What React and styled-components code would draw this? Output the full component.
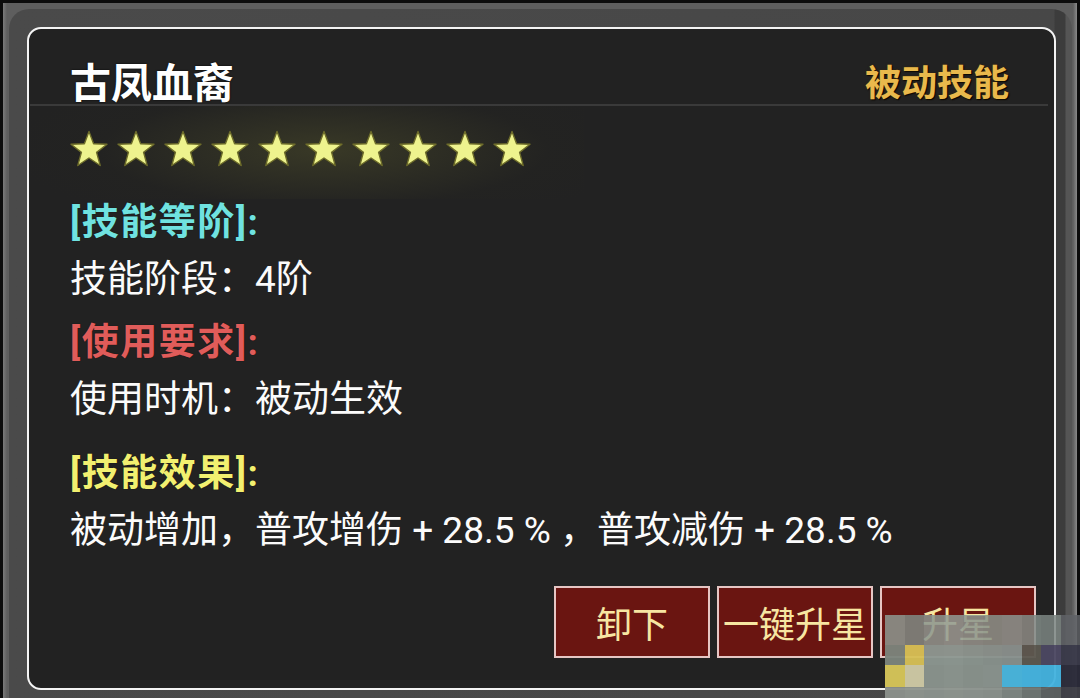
import React from "react";
import styled, { createGlobalStyle } from "styled-components";

const GlobalStyle = createGlobalStyle`
  html, body {
    margin: 0;
    padding: 0;
    background: #0c0c0c;
    overflow: hidden;
  }
  body {
    font-family: Roboto, "Noto Sans CJK SC", "Noto Sans", sans-serif;
  }
`;

const Page = styled.div`
  position: relative;
  width: 1080px;
  height: 698px;
  box-sizing: border-box;
  padding: 3px 3px 0 3px;
  overflow: hidden;
`;

const Frame = styled.div`
  height: 100%;
  box-sizing: border-box;
  padding: 6px 5px 0 6px;
  background: linear-gradient(90deg, #7a7a7a 0, #5e5e5e 4px, #5e5e5e calc(100% - 4px), #8a8a8a 100%);
`;

const Bezel = styled.div`
  height: 100%;
  box-sizing: border-box;
  padding: 18px 16px 0 18px;
  background: linear-gradient(90deg, #4a4a4a 0, #474747 calc(100% - 18px), #3c3c3c calc(100% - 17px), #3c3c3c calc(100% - 7px), #555 calc(100% - 6px));
  border-radius: 20px 20px 0 0;
`;

const Panel = styled.div`
  height: 663px;
  box-sizing: border-box;
  border: 2px solid #f4f4f4;
  border-radius: 14px;
  background: #222222;
  display: flex;
  flex-direction: column;
  overflow: hidden;
`;

const Header = styled.div`
  height: 77px;
  box-sizing: border-box;
  margin: 0 6px 0 1px;
  padding: 35px 39px 0 40px;
  border-bottom: 2px solid #3a3a3a;
  display: flex;
  justify-content: space-between;
  align-items: flex-start;
`;

const Title = styled.h1`
  margin: 0;
  font-size: 41px;
  line-height: 40px;
  font-weight: 700;
  color: #ffffff;
  text-shadow: 0 0 2px #000;
`;

const Kind = styled.span`
  font-size: 36px;
  line-height: 40px;
  font-weight: 700;
  color: #e9b94c;
  text-shadow: 0 0 2px #3a2500, 1px 1px 1px #000;
`;

const StarRow = styled.div`
  display: flex;
  gap: 7px;
  padding: 23px 0 30px 40px;
  margin-right: 470px;
  background: radial-gradient(ellipse 320px 80px at 295px 44px, rgba(88, 88, 44, 0.42), rgba(40, 40, 30, 0.15) 70%, rgba(34, 34, 34, 0) 100%);
`;

const Star = () => (
  <svg width="40" height="40" viewBox="0 0 40 40">
    <polygon
      points="20,2.5 24.6,14.8 38,15.2 27.6,23.4 31.2,36.5 20,29 8.8,36.5 12.4,23.4 2,15.2 15.4,14.8"
      fill="#eef38e"
      stroke="#6d6c2a"
      strokeWidth="1.4"
      strokeLinejoin="round"
    />
  </svg>
);

const Body = styled.div`
  padding: 0 18px 0 41px;
  display: flex;
  flex-direction: column;
  flex: 1;
`;

const Section = styled.section`
  margin-top: ${(p) => p.$gap || 0}px;
`;

const Heading = styled.div`
  font-size: 37px;
  line-height: 54px;
  font-weight: 700;
  letter-spacing: 1.5px;
  color: ${(p) => p.$color};
  margin-top: -3px;
  margin-bottom: 3px;
  text-shadow: 0 0 1px rgba(0, 0, 0, 0.8);
`;

const Line = styled.div`
  font-size: 37px;
  line-height: 54px;
  font-weight: 400;
  color: #fbfbfb;
  white-space: nowrap;
`;

const Actions = styled.div`
  margin-top: 28px;
  display: flex;
  justify-content: flex-end;
  gap: 7px;
`;

const Button = styled.button`
  width: 156px;
  height: 72px;
  box-sizing: border-box;
  border: 2px solid #e6c6c4;
  background: #6a1511;
  color: #f7e6a2;
  font-family: "Noto Sans CJK SC", sans-serif;
  font-size: 36px;
  line-height: 1;
  padding: 0;
  white-space: nowrap;
  cursor: pointer;
`;

// pixelated patch over the lower right corner
const Mosaic = styled.div`
  position: absolute;
  left: 885px;
  top: 615px;
  width: 195px;
  height: 83px;
  display: grid;
  grid-template-columns: repeat(10, 1fr);
  grid-template-rows: 30px 20px 22px 11px;
`;

const Cell = styled.div`
  background: ${(p) => p.$c};
  opacity: ${(p) => p.$o};
`;

const mosaicRows = [
  ["#8d9790", "#7f8983", "#8a958f", "#909a94", "#8a948e", "#87918b", "#8a948f", "#808a86", "#7b8581", "#5f6266"],
  ["#7c847c", "#d6bf55", "#8c9791", "#8e9892", "#8a958f", "#88928d", "#86908c", "#5c5850", "#4c4862", "#3a3a4a"],
  ["#d6c65a", "#cfcaa6", "#8a948e", "#8c9690", "#89938d", "#8a948f", "#4ab6de", "#46b4e0", "#44b2de", "#2c2c3a"],
  ["#8a908a", "#8e948e", "#8a928c", "#8c948e", "#8a928c", "#88908a", "#7c8480", "#6c7470", "#5c6060", "#404048"],
];

const stars = Array.from({ length: 10 });

export default function App() {
  return (
    <>
      <GlobalStyle />
      <Page>
        <Frame>
          <Bezel>
            <Panel>
              <Header>
                <Title>古凤血裔</Title>
                <Kind>被动技能</Kind>
              </Header>
              <StarRow>
                {stars.map((_, i) => (
                  <Star key={i} />
                ))}
              </StarRow>
              <Body>
                <Section>
                  <Heading $color="#70e2e0">[技能等阶]:</Heading>
                  <Line>技能阶段：4阶</Line>
                </Section>
                <Section $gap={12}>
                  <Heading $color="#e05c5a">[使用要求]:</Heading>
                  <Line>使用时机：被动生效</Line>
                </Section>
                <Section $gap={23}>
                  <Heading $color="#f2f070">[技能效果]:</Heading>
                  <Line>被动增加，普攻增伤 + 28.5 % ，普攻减伤 + 28.5 %</Line>
                </Section>
                <Actions>
                  <Button>卸下</Button>
                  <Button>一键升星</Button>
                  <Button>升星</Button>
                </Actions>
              </Body>
            </Panel>
          </Bezel>
        </Frame>
        <Mosaic>
          {mosaicRows.map((row, r) =>
            row.map((c, i) => <Cell key={`${r}-${i}`} $c={c} $o={r === 0 ? 0.86 : 0.96} />)
          )}
        </Mosaic>
      </Page>
    </>
  );
}
